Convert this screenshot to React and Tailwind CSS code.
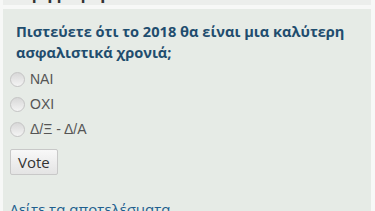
export default function App() {
  const opts = ["ΝΑΙ", "ΟΧΙ", "Δ/Ξ - Δ/Α"];
  return (
    <div className="w-[375px] h-[211px] overflow-hidden bg-[#f7f8f7]" style={{ fontFamily: '"Open Sans", "Noto Sans", sans-serif' }}>
      <div className="mx-[3px] w-[368px] h-[5px] bg-[#eceeec] overflow-hidden relative">
        <div className="absolute left-[24px] top-[-17px] text-[17px] font-bold text-[#333] leading-[20px]">ψηφοφορία</div>
      </div>
      <div className="mx-[3px] mt-[4px] w-[368px] h-[220px] bg-[#e6ebe6] pt-[12px]">
        <div className="pl-[13px] pr-[2px] text-[14.6px] font-bold leading-[21px] text-[#1f4d6e] whitespace-nowrap">
          Πιστεύετε ότι το 2018 θα είναι μια καλύτερη
          <br />
          ασφαλιστικά χρονιά;
        </div>
        <div className="mt-[8px] pl-[7px] flex flex-col gap-[8px]">
          {opts.map((o) => (
            <div key={o} className="flex items-center h-[17px]">
              <span className="w-[15px] h-[15px] rounded-full border border-[#c4c4c4] bg-gradient-to-b from-[#d8d8d8] to-[#f4f4f4]" />
              <span className="ml-[5px] text-[14px] text-[#555]" style={{ fontFamily: '"Liberation Sans", Arial, sans-serif' }}>{o}</span>
            </div>
          ))}
        </div>
        <button className="mt-[11px] ml-[7px] h-[26px] px-[7px] border border-[#c8c8c8] rounded-[2px] bg-gradient-to-b from-[#f8f8f8] to-[#e4e4e4] text-[15px] text-[#333] leading-none">
          Vote
        </button>
        <div className="mt-[24px] pl-[7px] text-[15px] text-[#1f5f8e] leading-[20px]">Δείτε τα αποτελέσματα</div>
      </div>
    </div>
  );
}
